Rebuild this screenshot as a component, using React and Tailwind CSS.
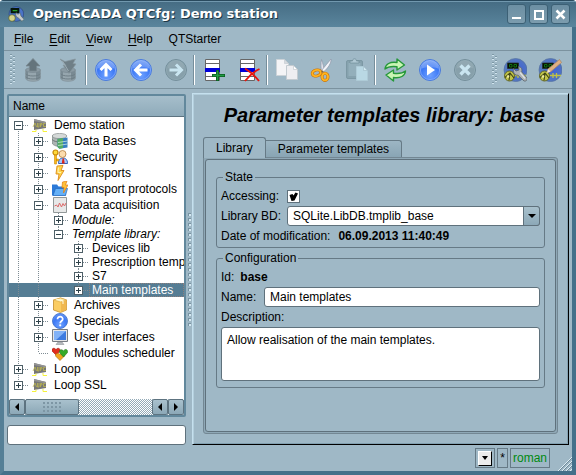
import { useState } from "react";
import clsx from "clsx";

/* ---------- toolbar icons (24x24) ---------- */

function Svg24({ children }) {
  return (
    <svg viewBox="0 0 24 24" className="h-6 w-6 shrink-0" aria-hidden="true">
      {children}
    </svg>
  );
}

function Cylinder() {
  return (
    <>
      <path d="M4.500 12v8c0 4.400 15 4.400 15 0v-8z" fill="#96a6ae" />
      <path d="M15 12v10c2.500-.4 4-1 4-2v-8zM5 12h2v9.500c-1.400-.4-2-.9-2-1.500z" fill="#798a93" />
      <ellipse cx="12" cy="12" rx="7.500" ry="2.500" fill="#8a9aa3" stroke="#788890" strokeWidth=".7" />
      <path d="M4.500 15.500c1 3.300 14 3.300 15 0M4.500 18.500c1 3.300 14 3.300 15 0" fill="none" stroke="#6f7f87" />
      <path d="M4.500 12v8c0 4.400 15 4.400 15 0v-8" fill="none" stroke="#84949d" strokeWidth=".8" />
    </>
  );
}

function DbLoadIcon() {
  return (
    <Svg24>
      <Cylinder />
      <path d="M12 .500l7 7.500h-3.500v5h-7V8H5z" fill="#64747c" stroke="#78888f" strokeWidth=".8" />
    </Svg24>
  );
}

function DbSaveIcon() {
  return (
    <Svg24>
      <Cylinder />
      <path d="M4 1l5 2.500L19.500 1 17 5.500l3 .5-7 9.500L7 7l3 .5z" fill="#6f7f87" stroke="#86969e" strokeWidth=".7" />
      <path d="M6.500 3l6 10" stroke="#9dadb5" />
    </Svg24>
  );
}

function Ball({ disabled, children }) {
  return (
    <Svg24>
      <circle
        cx="12" cy="12" r="10.500"
        fill={disabled ? "#87a0ab" : "url(#ball)"}
        stroke={disabled ? "#748f9b" : "#4a7bdc"}
      />
      <circle cx="12" cy="12" r="9.600" fill="none" stroke={disabled ? "#91aab5" : "#8db2fa"} strokeWidth=".7" />
      <path d="M3.500 10.500a8.500 8 0 0 1 17 0c-5-1.800-12-1.500-17 0z" fill="#fff" opacity={disabled ? ".09" : ".22"} />
      {children}
    </Svg24>
  );
}

const UpIcon = () => (
  <Ball><path d="M12 18.500V7M6.500 12L12 6.500l5.500 5.500" fill="none" stroke="#fff" strokeWidth="3" /></Ball>
);
const BackIcon = () => (
  <Ball><path d="M18.500 12H7M12 6.500L6.500 12l5.500 5.500" fill="none" stroke="#fff" strokeWidth="3" /></Ball>
);
const ForwardIcon = () => (
  <Ball disabled><path d="M5.500 12H17M12 6.500l5.500 5.500-5.500 5.500" fill="none" stroke="#c9e5f0" strokeWidth="3" /></Ball>
);
const StartIcon = () => (
  <Ball><path d="M9 6.500l8 5.500-8 5.500z" fill="#fff" /></Ball>
);
const StopIcon = () => (
  <Ball disabled><path d="M7.500 7.500l9 9M16.500 7.500l-9 9" stroke="#c9e5f0" strokeWidth="3.400" /></Ball>
);

function Sheet() {
  return (
    <>
      <path d="M3.500 1.500h14v21h-14z" fill="#fff" stroke="#666" />
      <path d="M3.500 5.500h14M3.500 18.500h14" stroke="#666" />
      <path d="M3 10h15v4H3z" fill="#0000d8" />
    </>
  );
}

const ItemAddIcon = () => (
  <Svg24>
    <Sheet />
    <path d="M15.500 12v11M10 17.500h13" stroke="#0a5c20" strokeWidth="3" />
    <path d="M15.500 12.700v9.600M10.700 17.500h11.600" stroke="#219b42" strokeWidth="1.400" />
  </Svg24>
);

const ItemDelIcon = () => (
  <Svg24>
    <Sheet />
    <path d="M8 10.500c5 3 10 7.500 14 12.500M22.500 11C17 13.500 12 18 8 23" fill="none" stroke="#e8150c" strokeWidth="1.900" />
  </Svg24>
);

const CopyIcon = () => (
  <Svg24>
    <path d="M1.500 1.500h8l4 4v12h-12z" fill="#f4f4f6" stroke="#ccd3d8" />
    <path d="M9.500 1.500v4h4z" fill="#d5dade" stroke="#c0c8cd" strokeWidth=".6" />
    <path d="M11.500 7.500h7l4 4v10h-11z" fill="#eeeef1" stroke="#c3cbd0" />
    <path d="M18.500 7.500v4h4z" fill="#fff" stroke="#bac3c9" strokeWidth=".6" />
  </Svg24>
);

const CutIcon = () => (
  <Svg24>
    <path d="M11.500 1.500c1.500 4 2.500 8 3 12.500l-3 .5c-.5-4.500-1-9 0-13z" fill="#dfe2ea" stroke="#9097a9" strokeWidth=".7" />
    <path d="M21 1c.5 4-3 9-7.500 13l-2-1.500C15 8.500 17.500 5 21 1z" fill="#f1f3f8" stroke="#9097a9" strokeWidth=".7" />
    <g fill="none">
      <ellipse cx="6.500" cy="15" rx="4.300" ry="3" transform="rotate(-15 6.500 15)" stroke="#c87207" strokeWidth="3" />
      <ellipse cx="15" cy="18.800" rx="3" ry="3.600" stroke="#c87207" strokeWidth="3" />
      <ellipse cx="6.500" cy="15" rx="4.300" ry="3" transform="rotate(-15 6.500 15)" stroke="#ffb320" strokeWidth="1.900" />
      <ellipse cx="15" cy="18.800" rx="3" ry="3.600" stroke="#ffb320" strokeWidth="1.900" />
    </g>
    <circle cx="12.500" cy="13.500" r="1.100" fill="#8d6a33" />
  </Svg24>
);

const PasteIcon = () => (
  <Svg24>
    <rect x="1.500" y="2.500" width="16" height="18" rx="1.500" fill="#86a2ae" stroke="#7c98a4" />
    <path d="M3.500 5h12v13h-12z" fill="#93afbb" />
    <path d="M5 5V3h2.500c0-3 4-3 4 0H14v2z" fill="#b0c9d4" stroke="#718d99" strokeWidth=".7" />
    <path d="M11.500 8.500h7l4 4v10h-11z" fill="#b9d8e4" stroke="#aecbd7" />
    <path d="M18.500 8.500v4h4z" fill="#d2e9f2" stroke="#9ebac6" strokeWidth=".6" />
  </Svg24>
);

const RefreshIcon = () => (
  <Svg24>
    <path d="M2 11c.5-5 5-7.500 12-6.500V1l7.500 6-7.500 5V8.700C8.500 8 5 8.500 2 11z" fill="#c9f5b4" stroke="#26983a" strokeWidth="1.400" strokeLinejoin="round" />
    <path d="M22.500 13c-.5 5-5 7.500-12 6.500V23L3 17l7.500-5v3.300c5.500.7 9 .2 12-2.300z" fill="#c9f5b4" stroke="#26983a" strokeWidth="1.400" strokeLinejoin="round" />
  </Svg24>
);

function ScadaBase() {
  return (
    <>
      <circle cx="12.500" cy="12" r="11.500" fill="url(#scada)" stroke="#54719f" strokeWidth=".7" />
      <path d="M4.500 5h11v5.500h-11z" fill="#050d05" stroke="#24301f" strokeWidth=".7" />
      <path d="M6.500 6.500h2.500v2.500H6.500zM11 6.500h2.500v2.500H11z" fill="none" stroke="#127012" />
      <path d="M11 17.500h12M15 15v5M18.500 15v5" stroke="#c0c243" strokeWidth="1.300" />
      <circle cx="6.500" cy="18" r="5" fill="#c0c348" stroke="#5d611f" strokeWidth=".9" />
      <path d="M2 19.500L7 15l4 5M7 15l-1 7.500" fill="none" stroke="#3d4114" strokeWidth="1.100" />
      <circle cx="5" cy="18.500" r="1.300" fill="#eceb9b" />
    </>
  );
}

const QtCfgIcon = () => (
  <Svg24>
    <ScadaBase />
    <path d="M10.500 10.500l2.500 2.500 3-1-.5-3.500c3 .5 4 3 3.200 5.300l5.300 6.200c.5 2-1 3.500-3 3L15 17.200c-3 .5-5.500-2.700-4.500-6.700z" fill="#aeb2b5" stroke="#596268" strokeWidth=".8" />
    <path d="M17 14.500l5 6" stroke="#dfe2e2" strokeWidth="1.200" />
  </Svg24>
);

const VisionIcon = () => (
  <Svg24>
    <ScadaBase />
    <path d="M21.500 1.500l2 3L13 13.500l-3.500 1 .5-3.500z" fill="#dfb083" stroke="#a98463" strokeWidth=".7" />
    <path d="M9 15l1-4 2.500 2.500z" fill="#f6e7cf" />
  </Svg24>
);

/* ---------- tree icons (16x16) ---------- */

function Svg16({ children }) {
  return (
    <svg viewBox="0 0 16 16" className="h-4 w-4 shrink-0" aria-hidden="true">
      {children}
    </svg>
  );
}

const TREE_ICONS = {
  station: (
    <Svg16>
      <path d="M2 2l12 3v6L2 13z" fill="#777" />
      <path d="M2 2l12 3v1.500L2 4z" fill="#949494" />
      <path d="M1 10l2-4 1.500 4M5.500 6v4h1.500V6M8.500 10V6.500h1.500V8H8.500M13.500 6.500H11.500V9.500h2.500" fill="none" stroke="#bdb64f" strokeWidth=".8" />
      <path d="M0 14.500h4v-2M11 12v2.500h4" fill="none" stroke="#f6f23c" />
    </Svg16>
  ),
  db: (
    <Svg16>
      <path d="M0 3v7c1 2.500 6 4 10 3.500V3z" fill="#aeb5b4" stroke="#737b7a" strokeWidth=".7" />
      <ellipse cx="7.500" cy="3" rx="7.300" ry="2.600" fill="#d5d9d8" stroke="#868d8c" strokeWidth=".7" />
      <path d="M0 6.500c2 2 5 2.500 8 2.500" fill="none" stroke="#6f7776" />
      <path d="M5.500 6L15.500 4.500v10l-8 1.200c-1.500-.8-2-1.700-2-2.700z" fill="#377fc0" />
      <path d="M5.500 6L11 5v10l-3.500.7c-1.500-.8-2-1.700-2-2.700z" fill="#54ad61" />
      <path d="M6 9.500l9.500-1.500M6 12.500l9.500-1.500" stroke="#c9e7e0" strokeWidth=".8" />
    </Svg16>
  ),
  security: (
    <Svg16>
      <path d="M6.500 14.500c0-4 2-5.500 4.500-5.500s4.500 1.500 4.500 5.500z" fill="#a8c9fb" stroke="#3464bd" />
      <circle cx="10.500" cy="5" r="3.500" fill="#fbdcae" stroke="#b57e3d" strokeWidth=".8" />
      <path d="M10.500 9.500h1.500l.7 5h-2.900z" fill="#dd2619" />
      <circle cx="3.500" cy="3.500" r="2.500" fill="#ffda39" stroke="#c88a0c" strokeWidth="1.200" />
      <path d="M2.500 6h2v9h-2zM4.500 10h2v2h-2z" fill="#fcb918" stroke="#c88a0c" strokeWidth=".6" />
    </Svg16>
  ),
  bolt: (
    <Svg16>
      <path d="M5 1l6-.5L9 5.500h3L6 15.500l1-6.500H4z" fill="#ffd54a" stroke="#dd8a18" strokeWidth=".9" />
      <path d="M6.500 2.500L6 7.500h3" stroke="#fff0b0" fill="none" />
    </Svg16>
  ),
  protocol: (
    <Svg16>
      <path d="M0 3.500h5l1.500 2H14V14.500H0z" fill="#2c7ad8" />
      <path d="M1 14.500l2.500-7H15.500L13.500 14.500z" fill="#65b0f6" stroke="#2367bd" strokeWidth=".7" />
      <path d="M10.500 1l4.500-1-1.500 4h2.500L11.500 12l.5-5.500h-2z" fill="#ffc13a" stroke="#e07d12" strokeWidth=".7" />
    </Svg16>
  ),
  daq: (
    <Svg16>
      <path d="M1.500.5h13v15h-13z" fill="#e7e8e8" stroke="#929898" />
      <path d="M2.500 9l2-1 1.500 2 1.500-4L9.500 10l1.500-3.500L12.500 9l1.500-3" fill="none" stroke="#dc6a6a" />
    </Svg16>
  ),
  archive: (
    <Svg16>
      <path d="M1.500 3l7-2 6 2v10l-6 2.500-7-2.500z" fill="#fbcd62" stroke="#c28b2b" strokeWidth=".8" />
      <path d="M1.500 3l7 2 6-2-6-2z" fill="#fff0b2" stroke="#e0ad49" strokeWidth=".7" />
      <path d="M9 5v10l5.500-2.300V3.300z" fill="#f0b850" />
      <path d="M4 2l7 2v3" fill="none" stroke="#fffbe0" />
    </Svg16>
  ),
  help: (
    <Svg16>
      <circle cx="8" cy="8" r="7.500" fill="url(#ball)" stroke="#4475cd" strokeWidth=".9" />
      <path d="M5.500 6.200c0-3.400 5.500-3.200 5.200 0C10.600 8 8.200 8 8.200 10.200" fill="none" stroke="#fff" strokeWidth="1.800" />
      <circle cx="8.200" cy="12.300" r="1.100" fill="#fff" />
    </Svg16>
  ),
  ui: (
    <Svg16>
      <path d="M.5.500h15v12H.5z" fill="#e6e6e6" stroke="#777c83" />
      <path d="M2 2h12v9H2z" fill="#3d7be0" />
      <path d="M2 2h12L4 11H2z" fill="#82b2f7" />
      <path d="M6 13h4l2 2.500H4z" fill="#b8bcc0" stroke="#85898f" strokeWidth=".5" />
    </Svg16>
  ),
  modules: (
    <Svg16>
      <path d="M4 10L0 6c-.5-3 2.500-3.500 4-1.500C5.500 2.500 8.500 3 8 6z" fill="#e02c1b" stroke="#a11a10" strokeWidth=".6" />
      <path d="M8 15.500l-4.500-4.500C3.500 8 6.500 7.500 8 9.500c1.500-2 4.500-1.500 4.500 1.500z" fill="#f0a51e" stroke="#b06a10" strokeWidth=".6" />
      <path d="M11.500 12L7.500 7.500c-.5-3 2.500-3.500 4-1.500 1.500-2.500 4.500-2 4 1.500z" fill="#35aa28" stroke="#1c7615" strokeWidth=".6" />
    </Svg16>
  ),
};

/* ---------- data ---------- */

const MENUS = [
  { key: "F", rest: "ile" },
  { key: "E", rest: "dit" },
  { key: "V", rest: "iew" },
  { key: "H", rest: "elp" },
  { key: "", rest: "QTStarter" },
];

const TOOL_GROUPS = [
  [["Load from DB", DbLoadIcon], ["Save to DB", DbSaveIcon]],
  [["Up", UpIcon], ["Previous", BackIcon], ["Next", ForwardIcon]],
  [["Add item", ItemAddIcon], ["Delete item", ItemDelIcon]],
  [["Copy", CopyIcon], ["Cut", CutIcon], ["Paste", PasteIcon]],
  [["Refresh", RefreshIcon], ["Start", StartIcon], ["Stop", StopIcon]],
];

const TREE = [
  {
    label: "Demo station", icon: "station", open: true, children: [
      { label: "Data Bases", icon: "db" },
      { label: "Security", icon: "security" },
      { label: "Transports", icon: "bolt" },
      { label: "Transport protocols", icon: "protocol" },
      {
        label: "Data acquisition", icon: "daq", open: true, children: [
          { label: "Module:", italic: true },
          {
            label: "Template library:", italic: true, open: true, children: [
              { label: "Devices lib" },
              { label: "Prescription temp" },
              { label: "S7" },
              { label: "Main templates" },
            ],
          },
        ],
      },
      { label: "Archives", icon: "archive" },
      { label: "Specials", icon: "help" },
      { label: "User interfaces", icon: "ui" },
      { label: "Modules scheduler", icon: "modules", leaf: true },
    ],
  },
  { label: "Loop", icon: "station" },
  { label: "Loop SSL", icon: "station" },
];

/* ---------- tree ---------- */

function Guide({ h, kind, first, last, open }) {
  const mid = h / 2;
  return (
    <svg width="20" height={h} className="shrink-0" shapeRendering="crispEdges" aria-hidden="true">
      <g stroke="#7f8c94" strokeDasharray="1 1" fill="none">
        {kind === "line" && <path d={`M9.500 0V${h}`} />}
        {kind !== "line" && kind !== "none" && (
          <>
            {!first && <path d={`M9.500 0V${mid}`} />}
            {!last && <path d={`M9.500 ${mid}V${h}`} />}
            <path d={`M10 ${mid + 0.5}H20`} />
          </>
        )}
      </g>
      {kind === "box" && (
        <>
          <rect x="5.500" y={mid - 3.5} width="8" height="8" fill="#fff" stroke="#4f6068" />
          <path d={`M7 ${mid + 0.5}h5`} stroke="#2d4048" />
          {!open && <path d={`M9.500 ${mid - 2}v5`} stroke="#2d4048" />}
        </>
      )}
    </svg>
  );
}

function TreeNode({ node, lines, first, last, selected, onSelect }) {
  const isSelected = selected === node.label;
  const h = node.icon ? 16 : 14;

  return (
    <li role="treeitem" aria-selected={isSelected} aria-expanded={node.leaf ? undefined : Boolean(node.open)}>
      <div
        onClick={() => onSelect(node.label)}
        className={clsx(
          "flex cursor-default items-center whitespace-nowrap",
          node.icon ? "h-4" : "h-3.5",
          isSelected && "bg-[#557d94] text-white",
        )}
      >
        {lines.map((on, i) => (
          <Guide key={i} h={h} kind={on ? "line" : "none"} />
        ))}
        <Guide h={h} kind={node.leaf ? "elbow" : "box"} first={first} last={last} open={node.open} />
        {node.icon && <span className="ml-[3px] mr-[3px]">{TREE_ICONS[node.icon]}</span>}
        <span
          className={clsx(
            "px-[3px] leading-[14px]",
            node.italic && "italic",
            isSelected && "flex-1 outline-1 -outline-offset-1 outline-dotted outline-[#8d7f7d]",
          )}
        >
          {node.label}
        </span>
      </div>
      {node.open && (
        <ul role="group">
          {node.children.map((child, i) => (
            <TreeNode
              key={child.label}
              node={child}
              lines={[...lines, !last]}
              last={i === node.children.length - 1}
              selected={selected}
              onSelect={onSelect}
            />
          ))}
        </ul>
      )}
    </li>
  );
}

function ScrollButton({ dir }) {
  return (
    <button
      type="button"
      aria-label={`Scroll ${dir}`}
      className="grid w-4 shrink-0 place-items-center rounded-xs border border-[#5d7380] bg-linear-to-b from-[#a9c1cd] to-[#8ca8b7]"
    >
      <svg width="4" height="8" viewBox="0 0 4 8" aria-hidden="true">
        <path d={dir === "left" ? "M4 0v8L0 4z" : "M0 0v8l4-4z"} />
      </svg>
    </button>
  );
}

function NavTree() {
  const [selected, setSelected] = useState("Main templates");
  return (
    <div className="flex flex-1 flex-col overflow-hidden rounded-xs border-2 border-[#62889c] bg-white">
      <div className="h-[21px] shrink-0 border-b border-[#5d7380] bg-linear-to-b from-[#a6becb] to-[#8fabba] pl-1 leading-5">
        Name
      </div>
      <ul role="tree" aria-label="Name" className="flex-1">
        {TREE.map((node, i) => (
          <TreeNode
            key={node.label}
            node={node}
            lines={[]}
            first={i === 0}
            last={i === TREE.length - 1}
            selected={selected}
            onSelect={setSelected}
          />
        ))}
      </ul>
      <div className="flex h-4 shrink-0 bg-[repeating-conic-gradient(#93aab7_0_25%,#fff_0_50%)] bg-size-[2px_2px]">
        <ScrollButton dir="left" />
        <div className="grid w-[54px] place-items-center rounded-xs border border-[#5d7380] bg-linear-to-b from-[#a9c1cd] to-[#8ca8b7]">
          <svg width="19" height="10" shapeRendering="crispEdges" aria-hidden="true">
            {[0, 4, 8].map((y) => (
              <path key={y} d={`M0 ${y + 1}h19`} stroke="#7d96a4" strokeWidth="2" strokeDasharray="2 2" />
            ))}
          </svg>
        </div>
        <div className="flex-1" />
        <ScrollButton dir="left" />
        <ScrollButton dir="right" />
      </div>
    </div>
  );
}

/* ---------- window chrome ---------- */

function TitleButton({ label, children }) {
  return (
    <button
      type="button"
      aria-label={label}
      className="grid h-5 w-[19px] place-items-center rounded-[3px] border border-[#3c6075] bg-linear-to-b from-[#6c8fa3] to-[#7c9cae]"
    >
      <svg width="11" height="11" fill="none" stroke="#fff" strokeWidth="2" aria-hidden="true">
        {children}
      </svg>
    </button>
  );
}

function TitleBar() {
  return (
    <header className="flex h-[27px] items-center gap-[3px] border-t border-[#294a5e] bg-linear-to-b from-[#456c83] to-[#5a859d] pl-2 pr-1.5 shadow-[inset_0_1px_0_#7198ae]">
      <svg viewBox="0 0 24 24" className="h-4 w-4" aria-hidden="true">
        <circle cx="12.500" cy="12" r="11" fill="#4b74c8" stroke="#2c467c" />
        <path d="M4 3h13v8H4z" fill="#06160a" />
        <path d="M7 7h7" stroke="#28a02a" strokeWidth="2" />
        <circle cx="6" cy="18" r="5" fill="#d3d48c" stroke="#52561f" />
        <path d="M12 10l3 2.500L18 10l1.500 5 4.500 5-3 3-6-5.500c-3-.5-4-4-3-7.500z" fill="#c5cacb" stroke="#566" />
      </svg>
      <h1 className="flex-1 truncate pl-1.5 font-['DejaVu_Sans',sans-serif] text-[13px] leading-4 font-bold text-white [text-shadow:1px_1px_0_#1d3645]">
        OpenSCADA QTCfg: Demo station
      </h1>
      <TitleButton label="Minimize"><path d="M1 9h9" /></TitleButton>
      <TitleButton label="Maximize"><path d="M2 2h8v8H2z" /></TitleButton>
      <TitleButton label="Close"><path d="M1.500 1.500l8 8M9.500 1.500l-8 8" strokeWidth="2.500" /></TitleButton>
    </header>
  );
}

function ToolGrip() {
  return (
    <svg width="5" height="31" className="shrink-0" shapeRendering="crispEdges" aria-hidden="true">
      {[0, 4, 8, 12, 16, 20, 24, 28].map((y) => (
        <g key={y}>
          <path d={`M0 ${y + 1}h2`} stroke="#7d98a6" strokeWidth="2" />
          <path d={`M0 ${y + 1.5}h2`} stroke="#cfe3ed" />
          {y < 28 && <path d={`M3 ${y + 3}h2`} stroke="#7d98a6" strokeWidth="2" />}
          {y < 28 && <path d={`M3 ${y + 3.5}h2`} stroke="#cfe3ed" />}
        </g>
      ))}
    </svg>
  );
}

function ToolButton({ label, icon: Icon }) {
  return (
    <button type="button" aria-label={label} className="grid h-8 w-[35px] shrink-0 place-items-center">
      <Icon />
    </button>
  );
}

function ToolBar() {
  return (
    <div role="toolbar" aria-label="Main" className="flex h-[38px] items-center border-b border-[#7b929f] pl-1.5">
      <ToolGrip />
      {TOOL_GROUPS.map((group, i) => (
        <div key={i} className="flex items-center">
          {i > 0 && <div className="mr-px h-[30px] w-0.5 border-x border-l-[#768e9b] border-r-white" />}
          {group.map(([label, icon]) => (
            <ToolButton key={label} label={label} icon={icon} />
          ))}
        </div>
      ))}
      <div className="flex items-center pl-2.5">
        <ToolGrip />
        <ToolButton label="QT configurator" icon={QtCfgIcon} />
        <ToolButton label="QT vision" icon={VisionIcon} />
      </div>
    </div>
  );
}

/* ---------- page ---------- */

const FIELD = "rounded-[3px] border border-[#5f717c] bg-white px-[5px] text-black outline-none";
const BOX = "rounded-[3px] border border-[#667a86] px-1";
const LEGEND = "ml-0.5 px-0.5 leading-[14px]";

function LibraryForm() {
  return (
    <form className="flex flex-col gap-[3px]">
      <fieldset className={clsx(BOX, "pb-[3px]")}>
        <legend className={LEGEND}>State</legend>
        <div className="flex flex-col gap-0.5 pt-1">
          <div className="flex h-4 items-center">
            <label htmlFor="access" className="w-[66px]">Accessing:</label>
            <span className="relative flex">
              <input
                id="access"
                type="checkbox"
                defaultChecked
                className="peer h-[13px] w-[13px] appearance-none border border-[#5f717c] bg-white"
              />
              <svg viewBox="0 0 13 13" className="pointer-events-none absolute inset-0 hidden h-[13px] w-[13px] peer-checked:block" aria-hidden="true">
                <path d="M2.500 5l3-1 1 1.500L8.500 2.500 11 3.500 7.500 10.500l-3 .5z" />
              </svg>
            </span>
          </div>
          <div className="flex h-5 items-center">
            <label htmlFor="libdb" className="w-[66px]">Library BD:</label>
            <div className="relative flex-1">
              <select id="libdb" className={clsx(FIELD, "block h-5 w-full appearance-none")}>
                <option>SQLite.LibDB.tmplib_base</option>
              </select>
              <span className="pointer-events-none absolute inset-y-0 right-0 grid w-[17px] place-items-center rounded-r-[3px] border border-[#5f717c] bg-linear-to-b from-[#a9c1cd] to-[#8ca8b7]">
                <svg width="8" height="4" aria-hidden="true"><path d="M0 0h8L4 4z" /></svg>
              </span>
            </div>
          </div>
          <p className="flex h-4 items-center gap-2">
            Date of modification: <b>06.09.2013 11:40:49</b>
          </p>
        </div>
      </fieldset>

      <fieldset className={clsx(BOX, "pb-1.5")}>
        <legend className={LEGEND}>Configuration</legend>
        <div className="flex flex-col gap-0.5 pt-1">
          <p className="flex h-4 items-center gap-1.5">
            Id: <b>base</b>
          </p>
          <div className="flex h-5 items-center">
            <label htmlFor="name" className="w-[43px]">Name:</label>
            <input id="name" type="text" defaultValue="Main templates" className={clsx(FIELD, "h-5 min-w-0 flex-1")} />
          </div>
          <label htmlFor="descr" className="h-4">Description:</label>
          <textarea
            id="descr"
            defaultValue="Allow realisation of the main templates."
            className={clsx(FIELD, "block h-[54px] w-full resize-none pt-1")}
          />
        </div>
      </fieldset>
    </form>
  );
}

export default function App() {
  const [tab, setTab] = useState("Library");

  return (
    <div className="flex min-h-screen flex-col overflow-hidden rounded-t-sm bg-[#4d7990] font-['Liberation_Sans',Arial,sans-serif] text-[12px] leading-4 text-black">
      <svg className="absolute h-0 w-0" aria-hidden="true">
        <defs>
          <radialGradient id="ball" cx=".5" cy=".75" r=".75">
            <stop offset="0" stopColor="#6fa2ff" />
            <stop offset=".6" stopColor="#3c78f5" />
            <stop offset="1" stopColor="#6c99f2" />
          </radialGradient>
          <radialGradient id="scada" cx=".6" cy=".5" r=".7">
            <stop offset="0" stopColor="#3f62d6" />
            <stop offset="1" stopColor="#5c7fb8" />
          </radialGradient>
        </defs>
      </svg>

      <TitleBar />

      <div className="flex flex-1 flex-col border-x-4 border-b-4 border-l-[#557f96] border-r-[#44708a] border-b-[#44708a] bg-[#9fb8c6]">
        <nav className="flex h-6 items-center gap-4 border-b border-[#7b929f] pl-2.5">
          {MENUS.map((m) => (
            <button key={m.rest} type="button">
              <span className="underline underline-offset-2">{m.key}</span>{m.rest}
            </button>
          ))}
        </nav>

        <ToolBar />

        <div className="flex flex-1 pt-1 pr-[3px] pl-[3px]">
          <aside className="flex w-[179px] shrink-0 flex-col gap-2 pt-px">
            <NavTree />
            <input type="text" aria-label="Search" className="h-5 w-full rounded-[3px] border border-[#5f717c] bg-white px-1 outline-none" />
          </aside>

          <div className="grid w-1.5 shrink-0 place-items-center">
            <svg width="3" height="113" shapeRendering="crispEdges" aria-hidden="true">
              <path d="M1.500 0v113" stroke="#7894a3" strokeWidth="3" strokeDasharray="3 2" />
              <path d="M2 1v112" stroke="#d5e8f1" strokeWidth="2" strokeDasharray="2 3" />
            </svg>
          </div>

          <main className="flex min-w-0 flex-1 flex-col border border-t-[#c5e0ee] border-r-black border-b-black border-l-[#c5e0ee] px-2.5 pb-2.5 shadow-[inset_1px_1px_0_#b3cedc,inset_-1px_-1px_0_#82a0b0]">
            <h2 className="pt-[7px] pr-[13px] pb-2 text-right text-[20px] leading-7 font-bold italic">
              Parameter templates library: base
            </h2>

            <div role="tablist" className="flex items-end">
              {["Library", "Parameter templates"].map((t) => (
                <button
                  key={t}
                  type="button"
                  role="tab"
                  aria-selected={tab === t}
                  onClick={() => setTab(t)}
                  className={clsx(
                    "border border-b-0 border-[#667a86] px-3",
                    tab === t
                      ? "relative z-10 -mb-px h-[21px] rounded-t-[3px] bg-[#9fb8c6]"
                      : "h-[17px] rounded-tr-[3px] border-l-0 bg-linear-to-b from-[#9db6c4] to-[#89a5b4]",
                  )}
                >
                  {t}
                </button>
              ))}
            </div>

            <div className="flex flex-1 flex-col rounded-[3px] rounded-tl-none border border-[#738793] bg-[#8fa8b6] p-px">
              <div className="flex-1 rounded-[3px] border border-[#5f717c] bg-[#9fb8c6] px-2.5 pt-2.5">
                {tab === "Library" && <LibraryForm />}
              </div>
            </div>
          </main>
        </div>

        <footer className="flex h-[26px] shrink-0 items-center justify-end gap-0.5">
          <div className="grid h-5 w-5 place-items-center border border-[#667a86]">
            <button type="button" aria-label="Messages" className="grid h-[15px] w-3.5 place-items-center border border-t-white border-r-black border-b-black border-l-white bg-[#ececec]">
              <svg width="6" height="4" aria-hidden="true"><path d="M0 0h6L3 4z" /></svg>
            </button>
          </div>
          <div className="h-5 border border-[#667a86] px-0.5 leading-[18px]">*</div>
          <div className="h-5 border border-[#667a86] px-0.5 leading-[18px] text-[#008a10]">roman</div>
          <svg width="14" height="14" className="ml-1.5 self-end" aria-hidden="true">
            <path d="M0 14L14 0M4 14L14 4M8 14l6-6M12 14l2-2" stroke="#deeef5" />
            <path d="M1 14L14 1M5 14l9-9M9 14l5-5" stroke="#6c8797" />
          </svg>
        </footer>
      </div>
    </div>
  );
}
